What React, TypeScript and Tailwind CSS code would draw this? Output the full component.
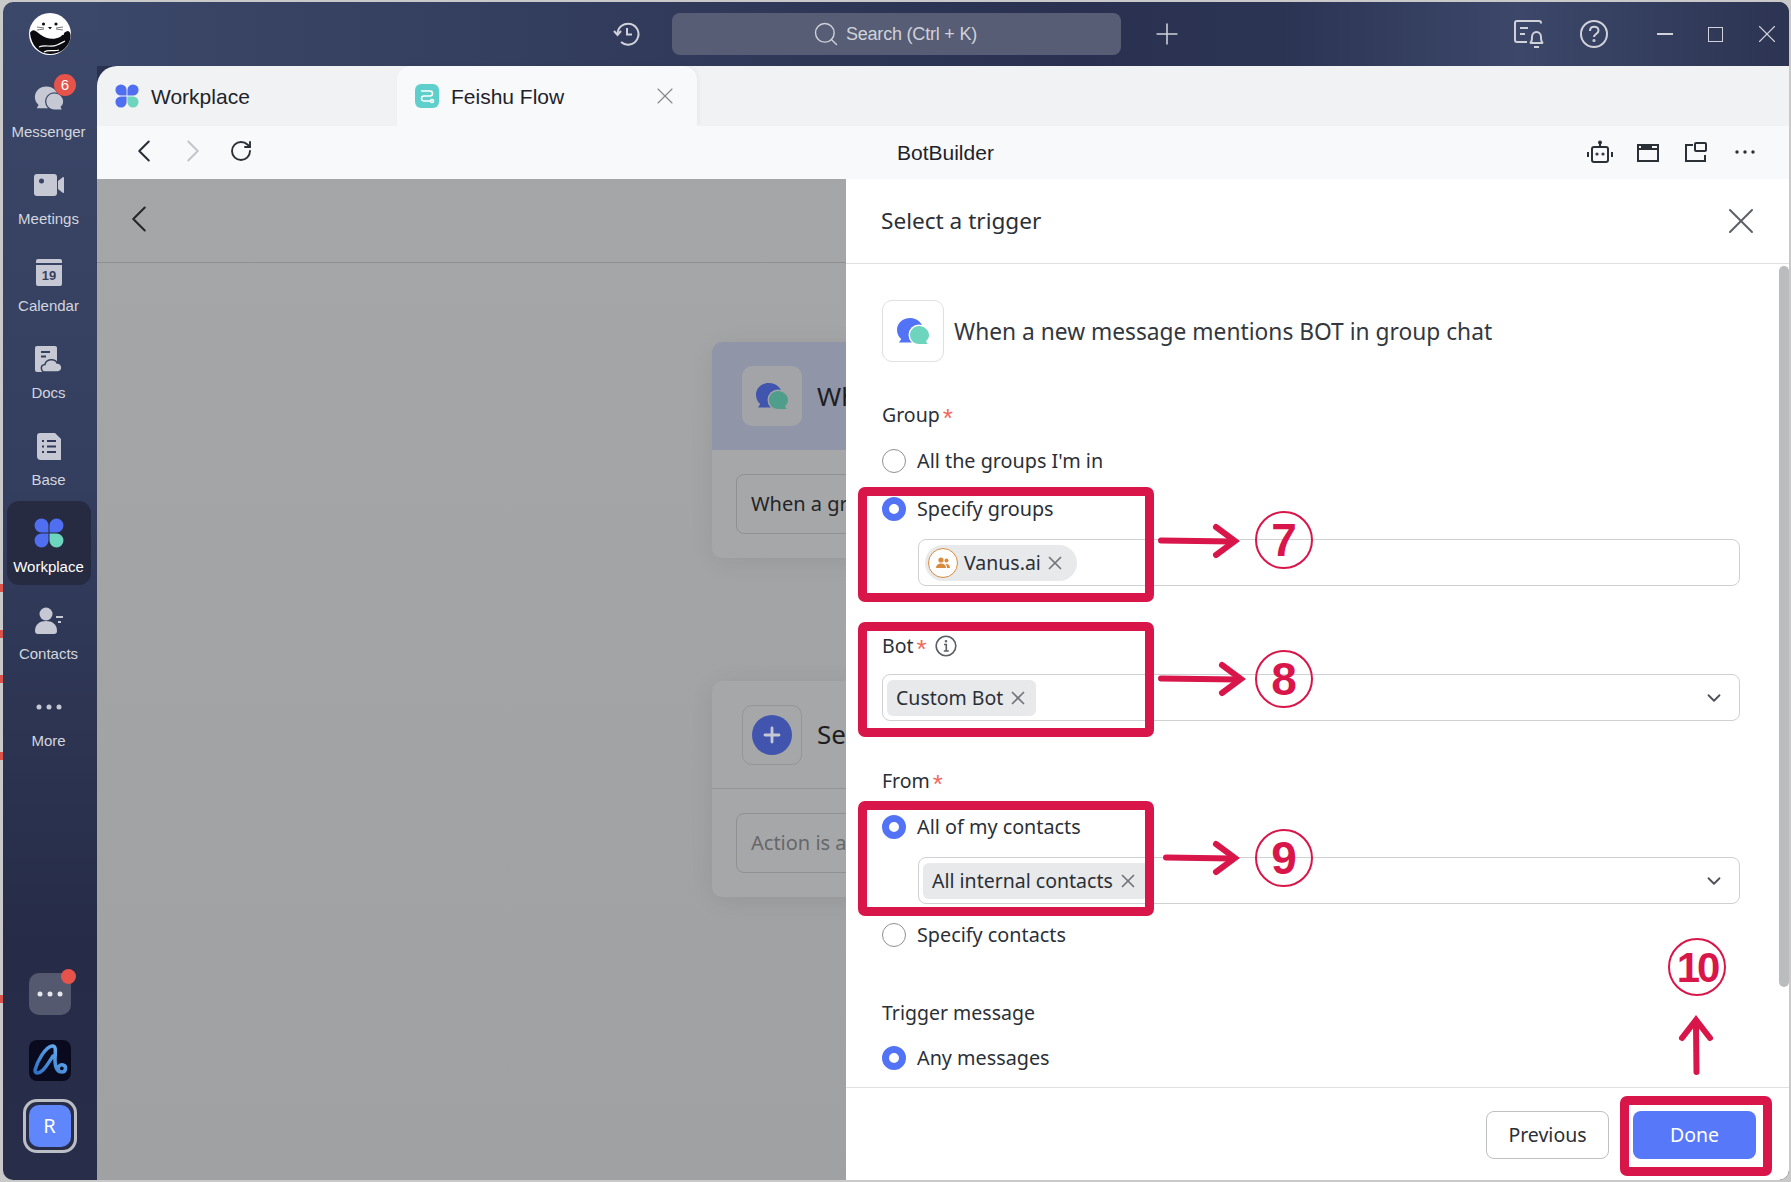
import { ChevronDown, ChevronLeft, ChevronRight, Plus, RotateCw, Search, X } from 'lucide-react'
import type { ReactNode } from 'react'

const SANS = 'font-["Noto_Sans","Open_Sans",sans-serif]'
const ARIAL = 'font-["Liberation_Sans",Arial,sans-serif]'

function Clover({ size = 30 }: { size?: number }) {
  return (
    <svg width={size} height={size} viewBox="0 0 28 28">
      <path d="M7 .5a6.500 6.500 0 0 1 6.500 6.500v6.500H7A6.500 6.500 0 0 1 7 .5z" fill="#4f6ff0" />
      <path d="M21 .5A6.500 6.500 0 0 0 14.500 7v6.500H21A6.500 6.500 0 0 0 21 .5z" fill="#4f6ff0" />
      <path d="M7 27.500a6.500 6.500 0 0 0 6.500-6.500v-6.500H7a6.500 6.500 0 0 0 0 13z" fill="#4f6ff0" />
      <path d="M21 27.500a6.500 6.500 0 0 1-6.500-6.500v-6.500H21a6.500 6.500 0 0 1 0 13z" fill="#6dd4bd" />
    </svg>
  )
}

function Otter() {
  return (
    <svg width="42" height="42" viewBox="0 0 42 42">
      <circle cx="21" cy="21" r="21" fill="#fff" />
      <path d="M1 20c1 12 9 21 20 21 9 0 17-5 20-14 1-4 1-8-2-9-3 0-5 4-8 6-6 3-14 2-19-2-4-3-8-8-11-2z" fill="#0b0b0f" />
      <path d="M10 34c6-3 12 1 18-2 3-1 6-3 8-4M15 39c5-3 10 0 15-2" stroke="#fff" strokeWidth="1.2" fill="none" />
      <circle cx="14.500" cy="11" r="1.600" fill="#111" />
      <circle cx="27" cy="11" r="1.600" fill="#111" />
      <path d="M19 14h4l-2 2.500z" fill="#111" />
      <path d="M8 14l7 1M8 17l7-1M34 14l-7 1M34 17l-7-1" stroke="#555" strokeWidth=".8" />
      <circle cx="34" cy="21" r="1" fill="#fff" />
    </svg>
  )
}

function Bubbles({ back, front, cut, w = 34, h = 30 }: { back: string; front: string; cut?: string; w?: number; h?: number }) {
  return (
    <svg width={w} height={h} viewBox="0 0 34 28">
      <path d="M14 1C6.500 1 1 6.400 1 13c0 3.600 1.600 6.800 4.200 9L3 25.500h20V24C26 21.700 27 17 27 13 27 6.400 21.500 1 14 1z" fill={back} />
      <circle cx="23" cy="18" r="10.500" fill={cut ?? 'none'} />
      <path d="M23 9c-5 0-9 4-9 9s4 9 9 9h8.500l-1.500-3c2-1.600 3-3.600 3-6 0-5-5-9-10-9z" fill={front} />
    </svg>
  )
}

function SideIcon({ name }: { name: string }) {
  const c = '#c6c9d4'
  if (name === 'Messenger') return <Bubbles back={c} front={c} cut="#3a4565" w={30} h={26} />
  if (name === 'Meetings')
    return (
      <svg width="30" height="24" viewBox="0 0 30 24">
        <rect x="0" y="1" width="23" height="22" rx="3" fill={c} />
        <circle cx="7.500" cy="8" r="2.500" fill="#3a4565" />
        <path d="M24 8l5-4c.5 0 1 .3 1 1v14c0 .7-.5 1-1 1l-5-4z" fill={c} />
      </svg>
    )
  if (name === 'Calendar')
    return (
      <svg width="26" height="27" viewBox="0 0 26 27">
        <path d="M2 0h22a2 2 0 0 1 2 2v2H0V2a2 2 0 0 1 2-2z" fill={c} />
        <path d="M0 6h26v19a2 2 0 0 1-2 2H2a2 2 0 0 1-2-2z" fill={c} />
        <text x="13" y="21" textAnchor="middle" fontSize="13" fontWeight="700" fontFamily="Liberation Sans" fill="#37415f">19</text>
      </svg>
    )
  if (name === 'Docs')
    return (
      <svg width="28" height="26" viewBox="0 0 28 26">
        <path d="M2 0h18a2 2 0 0 1 2 2v24H2a2 2 0 0 1-2-2V2a2 2 0 0 1 2-2z" fill={c} />
        <path d="M6 6h9M6 10.500h5" stroke="#34405e" strokeWidth="2" />
        <path d="M11 26c-6 0-6-7-1-7.500C11 13 20 12 22 17c6 0 7 9 0 9z" fill={c} stroke="#34405e" strokeWidth="1.500" />
      </svg>
    )
  if (name === 'Base')
    return (
      <svg width="24" height="27" viewBox="0 0 24 27">
        <path d="M3 0h15l6 6v21H4a4 4 0 0 1-4-4V3a3 3 0 0 1 3-3z" fill={c} />
        <path d="M5 8h2M10 8h9M5 13.500h2M10 13.500h9M5 19h2M10 19h9" stroke="#31395a" strokeWidth="2.200" />
      </svg>
    )
  if (name === 'Workplace') return <Clover />
  if (name === 'Contacts')
    return (
      <svg width="28" height="27" viewBox="0 0 28 27">
        <circle cx="11" cy="7" r="6.500" fill={c} />
        <path d="M0 24c0-7 5-10 11-10s11 3 11 10c0 2-1 3-3 3H3c-2 0-3-1-3-3z" fill={c} />
        <path d="M21 10h7M23 15h3" stroke={c} strokeWidth="2" />
      </svg>
    )
  return (
    <svg width="28" height="6" viewBox="0 0 28 6">
      <circle cx="4" cy="3" r="2.500" fill={c} />
      <circle cx="14" cy="3" r="2.500" fill={c} />
      <circle cx="24" cy="3" r="2.500" fill={c} />
    </svg>
  )
}

const navItems = ['Messenger', 'Meetings', 'Calendar', 'Docs', 'Base', 'Workplace', 'Contacts', 'More']

function Sidebar() {
  return (
    <aside className="w-[94px] flex flex-col bg-[linear-gradient(180deg,#3c4869_0%,#343e5f_40%,#262c47_80%,#282e49_100%)]">
      <div className="h-[64px] flex items-center justify-center">
        <Otter />
      </div>
      <nav className="flex flex-col gap-[3px] pl-[4px]">
        {navItems.map((name) => (
          <div
            key={name}
            className={`relative h-[84px] w-[84px] rounded-[12px] flex flex-col items-center ${name === 'Workplace' ? 'bg-[#262b41]' : ''}`}
          >
            <div className="h-[64px] w-full absolute top-0 flex items-center justify-center pr-[1px]">
              <SideIcon name={name} />
            </div>
            <span className={`absolute top-[55px] pr-[1px] text-[15px] leading-[22px] ${ARIAL} ${name === 'Workplace' ? 'text-white' : 'text-[#d3d6df]'}`}>
              {name}
            </span>
            {name === 'Messenger' && (
              <span className={`absolute left-[47px] top-[8px] h-[22px] w-[22px] rounded-full bg-[#e5534b] text-white text-[15px] flex items-center justify-center ${ARIAL}`}>
                6
              </span>
            )}
          </div>
        ))}
      </nav>
      <div className="mt-auto flex flex-col items-center pb-[27px] pr-[1px]">
        <div className="relative h-[42px] w-[42px] rounded-[10px] bg-[#54596f] flex items-center justify-center">
          <svg width="28" height="6" viewBox="0 0 28 6">
            <circle cx="4" cy="3" r="2.500" fill="#e6e7ec" />
            <circle cx="14" cy="3" r="2.500" fill="#e6e7ec" />
            <circle cx="24" cy="3" r="2.500" fill="#e6e7ec" />
          </svg>
          <span className="absolute -right-[5px] -top-[4px] h-[15px] w-[15px] rounded-full bg-[#e5534b]" />
        </div>
        <div className="mt-[25px] h-[41px] w-[42px] rounded-[8px] bg-[#0a0a1e]">
          <svg width="42" height="41" viewBox="0 0 42 41" fill="none" strokeLinecap="round">
            <defs>
              <linearGradient id="appLogo" x1="0" y1="1" x2="1" y2="0">
                <stop offset="0" stopColor="#2f6fc4" />
                <stop offset="1" stopColor="#6cb6f5" />
              </linearGradient>
            </defs>
            <path d="M6 30C8 22 16 7 23 6c5-1 3 8 3 14 0 8 2 12 7 12 4 0 5-6 1-7-4-1-6 3-4 6M6 30c0 4 4 4 8 0 4-4 6-8 10-14" stroke="url(#appLogo)" strokeWidth="3.500" />
          </svg>
        </div>
        <div className="mt-[18px] p-[3px] rounded-[14px] border-[3px] border-[#bcbec6]">
          <div className={`h-[42px] w-[42px] rounded-[10px] bg-[#5f86fb] text-white text-[20px] flex items-center justify-center ${SANS}`}>R</div>
        </div>
      </div>
    </aside>
  )
}

function TitleBar() {
  return (
    <header className="relative h-[64px] shrink-0 flex items-center bg-[linear-gradient(90deg,#3b4768_0%,#2a3150_58%,#2c3454_70%,#3c4769_84%,#2c3452_100%)] text-[#d0d2da]">
      <div className="ml-[514px] w-[32px] flex justify-center">
        <svg width="28" height="28" viewBox="0 0 28 28" fill="none" stroke="currentColor" strokeWidth="2">
          <path d="M4.500 14A10.500 10.500 0 1 1 8 22" />
          <path d="M1 11l3.500 4L8 11" />
          <path d="M14 8v6.500h5" />
        </svg>
      </div>
      <div className={`ml-[29px] w-[449px] h-[42px] rounded-[8px] bg-[#575d75] flex items-center justify-center gap-[6px] pr-[4px] text-[18px] ${ARIAL}`}>
        <Search size={28} strokeWidth={1.200} />
        <span className="tracking-[-0.2px]">Search (Ctrl + K)</span>
      </div>
      <Plus size={34} strokeWidth={1.100} className="ml-[29px]" />
      <div className="ml-auto flex items-center">
        <svg width="30" height="28" viewBox="0 0 30 28" fill="none" stroke="currentColor" strokeWidth="2" className="mr-[36px]">
          <path d="M27 3.500V3a2 2 0 0 0-2-2H3a2 2 0 0 0-2 2v17a2 2 0 0 0 2 2h10" />
          <path d="M6 8h8M6 14h5" />
          <path d="M16 23c2-1 2-3 2-6 0-3 2-5 4.500-5s4.500 2 4.500 5c0 3 0 5 2 6zM20 27h5" />
        </svg>
        <svg width="28" height="28" viewBox="0 0 28 28" fill="none" stroke="currentColor" strokeWidth="2" className="mr-[49px]">
          <circle cx="14" cy="14" r="13" />
          <path d="M10 11c0-6 8.500-5.500 8.500-.5 0 3.500-4.500 3.500-4.500 6.500" />
          <circle cx="14" cy="20.500" r=".6" fill="currentColor" />
        </svg>
        <div className="h-[1.500px] w-[16px] bg-current mr-[35px]" />
        <div className="h-[15px] w-[15px] border-[1.5px] border-current mr-[29px]" />
        <X size={30} strokeWidth={0.9} className="mr-[7px]" />
      </div>
    </header>
  )
}

function TabBar() {
  return (
    <div className={`h-[60px] shrink-0 flex bg-[#f1f2f4] rounded-tl-[20px] ${ARIAL}`}>
      <div className="w-[300px] flex items-center pl-[18px] gap-[12px]">
        <Clover size={24} />
        <span className="text-[21px] text-[#1f2329] mt-[1px]">Workplace</span>
      </div>
      <div className="relative w-[300px] flex items-center pl-[18px] gap-[12px] bg-[#f8f9fb] rounded-t-[14px] shadow-[2px_0_4px_rgba(0,0,0,0.04)]">
        <div className="h-[24px] w-[24px] rounded-[6px] bg-[#5fcfcb] flex items-center justify-center">
          <svg width="16" height="16" viewBox="0 0 16 16" fill="none" stroke="#fff" strokeWidth="1.600">
            <path d="M2 3h9a2.500 2.500 0 0 1 0 5H5a2.500 2.500 0 0 0 0 5h6" />
            <circle cx="13" cy="13" r="1.500" />
          </svg>
        </div>
        <span className="text-[21px] text-[#1f2329] mt-[1px]">Feishu Flow</span>
        <X size={28} strokeWidth={1} className="absolute right-[18px] text-[#85888e]" />
      </div>
    </div>
  )
}

function ToolBar() {
  return (
    <div className="relative h-[53px] shrink-0 bg-[#f8f9fb] flex items-center text-[#2b2f36]">
      <ChevronLeft size={38} strokeWidth={1.300} className="ml-[28px] mb-[4px]" />
      <ChevronRight size={38} strokeWidth={1.300} className="ml-[11px] mb-[4px] text-[#c4c6cb]" />
      <RotateCw size={24} strokeWidth={1.900} className="ml-[17px] mb-[4px]" />
      <span className={`absolute left-[800px] text-[21px] mt-[1px] text-[#1f2329] ${ARIAL}`}>BotBuilder</span>
      <div className="ml-auto flex items-center mr-[33px] gap-[21px]">
        <svg width="26" height="26" viewBox="0 0 26 26" fill="none" stroke="currentColor" strokeWidth="2" className="mr-[1px]">
          <rect x="5" y="7" width="16" height="15" rx="2" />
          <path d="M13 7V3M1 12v5M25 12v5" />
          <circle cx="13" cy="2.500" r="1" fill="currentColor" />
          <circle cx="10" cy="14" r=".6" fill="currentColor" />
          <circle cx="16" cy="14" r=".6" fill="currentColor" />
        </svg>
        <svg width="26" height="26" viewBox="0 0 26 26" fill="none" stroke="currentColor" strokeWidth="2" className="mr-[1px]">
          <rect x="3" y="5" width="20" height="16" />
          <path d="M3 9h20" strokeWidth="2" />
          <path d="M6 7h11" />
        </svg>
        <svg width="26" height="26" viewBox="0 0 26 26" fill="none" stroke="currentColor" strokeWidth="2">
          <path d="M10 5H3v16h19v-6" />
          <rect x="12" y="3" width="11" height="8" rx="1" />
        </svg>
        <svg width="22" height="26" viewBox="0 0 22 26" fill="currentColor" className="mb-[2px] ml-[4px]">
          <circle cx="3" cy="13" r="1.700" />
          <circle cx="11" cy="13" r="1.700" />
          <circle cx="19" cy="13" r="1.700" />
        </svg>
      </div>
    </div>
  )
}

function StepCard({ title, field, active, muted, icon }: { title: string; field: string; active?: boolean; muted?: boolean; icon: ReactNode }) {
  return (
    <div className="w-[400px] h-[216px] rounded-[10px] bg-[#a6a7a8] shadow-[0_4px_24px_rgba(0,0,0,0.07)] overflow-hidden">
      <div className={`h-[108px] pl-[30px] flex items-center gap-[15px] ${active ? 'bg-[#9195a8]' : 'border-b border-[#949597]'}`}>
        <div className={`h-[60px] w-[60px] rounded-[10px] flex items-center justify-center ${active ? 'bg-[#a3a4a7]' : 'border border-[#949597]'}`}>{icon}</div>
        <span className={`text-[26px] text-[#1d1e22] ${SANS}`}>{title}</span>
      </div>
      <div className="pl-[24px] pt-[24px]">
        <div className={`h-[60px] rounded-[8px] border border-[#8f9092] pl-[14px] flex items-center text-[20px] ${SANS} ${muted ? 'text-[#66676a]' : 'text-[#232428]'}`}>
          {field}
        </div>
      </div>
    </div>
  )
}

function Backdrop() {
  return (
    <div className="absolute inset-0 bg-[linear-gradient(180deg,#a5a6a7,#a0a1a2)]">
      <div className="h-[84px] border-b border-[#8e8f90] flex items-center pl-[19px]">
        <ChevronLeft size={46} strokeWidth={1.100} className="text-[#25272b] mb-[4px]" />
      </div>
      <div className="pl-[615px] pt-[79px] flex flex-col gap-[123px]">
        <StepCard
          active
          title="Wh"
          field="When a gr"
          icon={<Bubbles back="#4155ae" front="#4f9e8c" cut="#a3a4a7" />}
        />
        <StepCard
          muted
          title="Se"
          field="Action is a"
          icon={
            <span className="h-[40px] w-[40px] rounded-full bg-[#4155ae] flex items-center justify-center">
              <Plus size={24} strokeWidth={2.800} className="text-[#c6c9d3]" />
            </span>
          }
        />
      </div>
    </div>
  )
}

function Label({ text, children }: { text: string; children?: ReactNode }) {
  return (
    <div className="h-[26px] flex items-center text-[19.5px] text-[#2b2f36]">
      {text}
      <span className="ml-[3px] text-[#ef6a5b] text-[26px] leading-[26px] mt-[6px] font-['Liberation_Sans']">*</span>
      {children}
    </div>
  )
}

function Radio({ text, on }: { text: string; on?: boolean }) {
  return (
    <div className="h-[26px] flex items-center gap-[11px] text-[19.8px] text-[#2b2f36]">
      {on ? (
        <span className="h-[24px] w-[24px] rounded-full border-[7px] border-[#5273f5] bg-white" />
      ) : (
        <span className="h-[24px] w-[24px] rounded-full border border-[#8f9095] bg-white" />
      )}
      {text}
    </div>
  )
}

function ChipX() {
  return <X size={22} strokeWidth={1.900} className="text-[#73767c] -mx-[3px]" />
}

function Drawer() {
  return (
    <section className={`absolute top-0 bottom-0 right-0 w-[943px] bg-white flex flex-col rounded-br-[10px] ${SANS}`}>
      <div className="h-[85px] shrink-0 border-b border-[#dfe0e2] flex items-center justify-between pl-[35px] pr-[26px]">
        <h2 className="text-[22.6px] text-[#2b2f36] font-normal">Select a trigger</h2>
        <X size={44} strokeWidth={1.100} className="text-[#5b5f66]" />
      </div>
      <div className="relative flex-1 overflow-hidden pl-[36px] pr-[49px] pt-[36px]">
        <div className="flex items-center gap-[10px]">
          <div className="h-[62px] w-[62px] rounded-[10px] border border-[#dfe0e2] flex items-center justify-center">
            <Bubbles back="#5273f5" front="#6dd4bd" cut="#fff" />
          </div>
          <span className="text-[22.75px] text-[#33373e] mt-[2px]">When a new message mentions BOT in group chat</span>
        </div>

        <div className="mt-[40px]"><Label text="Group" /></div>
        <div className="mt-[20px]"><Radio text="All the groups I'm in" /></div>
        <div className="mt-[22px]"><Radio text="Specify groups" on /></div>
        <div className="mt-[17px] ml-[36px] h-[47px] rounded-[8px] border border-[#cfd0d3] flex items-center pl-[6px]">
          <div className="h-[36px] w-[152px] rounded-full bg-[#e8e9ea] flex items-center pl-[3px] gap-[6px] text-[19.5px] text-[#2b2f36]">
            <span className="h-[30px] w-[30px] rounded-full border border-[#d98a3c] bg-white flex items-center justify-center">
              <svg width="14" height="12" viewBox="0 0 14 12" fill="#d98a3c">
                <circle cx="5" cy="3" r="2.600" />
                <circle cx="10.500" cy="3.500" r="2" />
                <path d="M0 11c0-3 2-4.500 5-4.500s5 1.500 5 4.500zM11 11c0-2-.5-3-1.500-4 2.500-.5 4.500 1 4.500 4z" />
              </svg>
            </span>
            Vanus.ai
            <ChipX />
          </div>
        </div>

        <div className="mt-[47px]">
          <Label text="Bot">
            <svg width="22" height="22" viewBox="0 0 22 22" fill="none" stroke="#5b5f66" strokeWidth="1.600" className="ml-[8px]">
              <circle cx="11" cy="11" r="9.800" />
              <path d="M9 9.500h2.300V16M8.800 16h5" />
              <circle cx="11" cy="6.200" r=".5" fill="#5b5f66" />
            </svg>
          </Label>
        </div>
        <div className="mt-[15px] h-[47px] rounded-[8px] border border-[#cfd0d3] flex items-center pl-[4px] pr-[14px]">
          <div className="h-[36px] w-[149px] rounded-[6px] bg-[#e8e9ea] flex items-center pl-[9px] gap-[7px] text-[19.5px] text-[#2b2f36]">
            Custom Bot
            <ChipX />
          </div>
          <ChevronDown size={22} strokeWidth={2} className="ml-auto text-[#4e5258]" />
        </div>

        <div className="mt-[47px]"><Label text="From" /></div>
        <div className="mt-[20px]"><Radio text="All of my contacts" on /></div>
        <div className="mt-[17px] ml-[36px] h-[47px] rounded-[8px] border border-[#cfd0d3] flex items-center pl-[4px] pr-[14px]">
          <div className="h-[36px] w-[226px] rounded-[6px] bg-[#e8e9ea] flex items-center pl-[9px] gap-[7px] text-[19.5px] text-[#2b2f36]">
            All internal contacts
            <ChipX />
          </div>
          <ChevronDown size={22} strokeWidth={2} className="ml-auto text-[#4e5258]" />
        </div>
        <div className="mt-[18px]"><Radio text="Specify contacts" /></div>

        <div className="mt-[52px]">
          <div className="h-[26px] flex items-center text-[19.5px] text-[#2b2f36]">Trigger message</div>
        </div>
        <div className="mt-[19px]"><Radio text="Any messages" on /></div>

        <div className="absolute right-0 top-[2px] h-[721px] w-[10px] rounded-full bg-[#bbbcbe]" />
      </div>
      <div className="h-[93px] shrink-0 border-t border-[#dfe0e2] flex items-start justify-end gap-[24px] pt-[23px] pr-[33px]">
        <button className="h-[48px] w-[123px] rounded-[8px] border border-[#bfc0c4] bg-white text-[19.5px] text-[#2b2f36]">Previous</button>
        <button className="h-[48px] w-[123px] rounded-[8px] bg-[#5778f8] text-[19.5px] text-white">Done</button>
      </div>
    </section>
  )
}

const redBoxes = [
  'left-[858px] top-[487px] w-[296px] h-[115px]',
  'left-[858px] top-[622px] w-[296px] h-[115px]',
  'left-[858px] top-[801px] w-[296px] h-[115px]',
  'left-[1620px] top-[1096px] w-[152px] h-[80px]',
]

const stepMarks = [
  { n: '7', pos: 'left-[1255px] top-[511px]' },
  { n: '8', pos: 'left-[1255px] top-[650px]' },
  { n: '9', pos: 'left-[1255px] top-[829px]' },
  { n: '10', pos: 'left-[1668px] top-[938px]' },
]

function HArrow({ pos, w }: { pos: string; w: number }) {
  return (
    <svg className={`absolute ${pos}`} width={w} height="36" viewBox={`0 0 ${w} 36`} fill="none" stroke="#d8164a" strokeLinecap="round" strokeLinejoin="miter">
      <path d={`M3 17.500L${w - 8} 18.500`} strokeWidth="6" />
      <path d={`M${w - 24} 4L${w - 5} 18L${w - 24} 32`} strokeWidth="6" />
    </svg>
  )
}

function Annotations() {
  return (
    <>
      {redBoxes.map((pos) => (
        <div key={pos} className={`absolute ${pos} border-[9px] border-[#d8164a] rounded-[7px]`} />
      ))}
      {stepMarks.map((m) => (
        <div
          key={m.n}
          className={`absolute ${m.pos} h-[58px] w-[58px] rounded-full border-2 border-[#d8164a] text-[#d8164a] flex items-center justify-center font-bold ${ARIAL} ${m.n === '10' ? 'tracking-[-3px] text-[42px]' : 'text-[46px]'}`}
        >
          {m.n}
        </div>
      ))}
      <HArrow pos="left-[1158px] top-[523px]" w={82} />
      <HArrow pos="left-[1158px] top-[661px]" w={88} />
      <HArrow pos="left-[1163px] top-[840px]" w={77} />
      <svg className="absolute left-[1678px] top-[1015px]" width="36" height="62" viewBox="0 0 36 62" fill="none" stroke="#d8164a" strokeLinecap="round" strokeLinejoin="miter">
        <path d="M18 10L18.500 57" strokeWidth="6" />
        <path d="M4 23L18 5L32 23" strokeWidth="6" />
      </svg>
    </>
  )
}

const strayMarks = [584, 630, 675, 752, 995]

export default function App() {
  return (
    <div className="relative h-[1182px] w-[1791px] overflow-hidden bg-[#c9c9c9]">
      {strayMarks.map((y) => (
        <div key={y} className="absolute left-0 h-[8px] w-[3px] bg-[#d9534a]" style={{ top: y }} />
      ))}
      <div className="absolute left-[3px] top-[2px] right-[2px] bottom-[2px] flex overflow-hidden rounded-[10px]">
        <Sidebar />
        <main className="flex-1 flex flex-col min-w-0 bg-[#2a3150]">
          <TitleBar />
          <TabBar />
          <ToolBar />
          <div className="relative flex-1 overflow-hidden">
            <Backdrop />
            <Drawer />
          </div>
        </main>
      </div>
      <Annotations />
    </div>
  )
}
